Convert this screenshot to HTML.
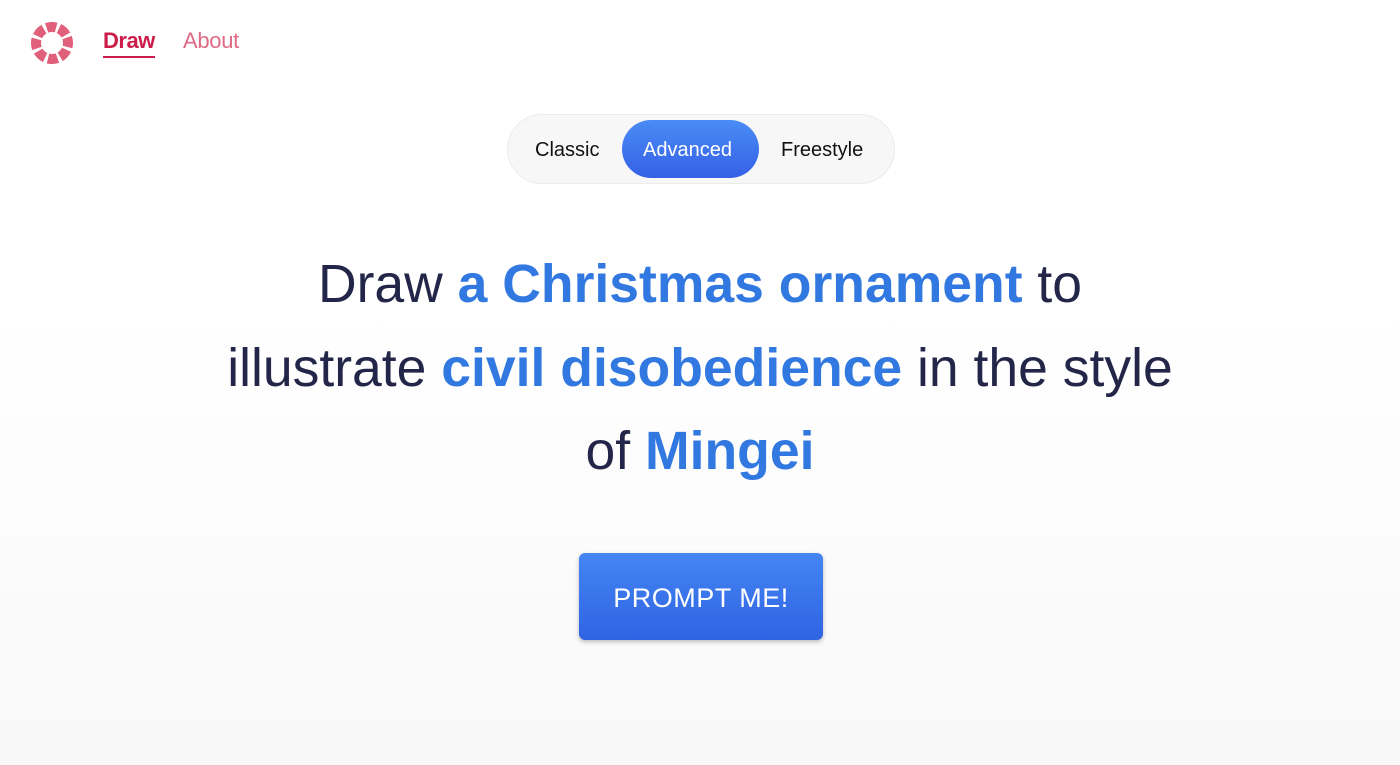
<!DOCTYPE html>
<html><head><meta charset="utf-8"><style>
html,body{margin:0;padding:0}
body{width:1400px;height:765px;overflow:hidden;background:linear-gradient(#fff 0%,#fff 40%,#f8f8f8 100%);font-family:"Liberation Sans",sans-serif;position:relative}
.logo{position:absolute;left:31px;top:22px}
.nav{position:absolute;top:28px;font-size:22px}
.draw{left:103px;color:#cc1d4a;font-weight:bold;letter-spacing:-0.5px}
.draw:after{content:"";position:absolute;left:0;right:0;top:28px;height:2px;background:#cc1d4a}
.about{left:183px;color:#de6a85;letter-spacing:-0.3px}
.toggle{position:absolute;left:507px;top:114px;width:388px;height:70px;box-sizing:border-box;border:1px solid #ebebeb;border-radius:35px;background:#f7f7f8}
.toggle span{position:absolute;top:24px;font-size:20px;color:#111}
.adv{position:absolute;left:114px;top:5px;width:137px;height:58px;border-radius:29px;background:linear-gradient(#4a8cf5,#3560e6)}
.head{position:absolute;left:0;width:1400px;top:243px;text-align:center;font-size:53.5px;line-height:83.5px;color:#232648}
.head b{color:#3178e0}
.btn{position:absolute;left:579px;top:553px;width:244px;height:87px;border-radius:6px;background:linear-gradient(#4486f3,#2f63e3);box-shadow:0 2px 5px rgba(0,0,0,.25);color:#fff;font-size:27px;text-align:center;line-height:90px;letter-spacing:0.5px}
</style></head><body>
<svg class="logo" width="42" height="42" viewBox="0 0 42 42"><circle cx="21" cy="21" r="16" fill="none" stroke="#e0607c" stroke-width="10" stroke-dasharray="9.57 3" transform="rotate(-20 21 21)"/></svg>
<div class="nav draw">Draw</div>
<div class="nav about">About</div>
<div class="toggle">
<div class="adv"></div>
<span style="left:27px">Classic</span>
<span style="left:135px;color:#fff">Advanced</span>
<span style="left:273px">Freestyle</span>
</div>
<div class="head">Draw <b>a Christmas ornament</b> to<br>illustrate <b>civil disobedience</b> in the style<br>of <b>Mingei</b></div>
<div class="btn">PROMPT ME!</div>
</body></html>
